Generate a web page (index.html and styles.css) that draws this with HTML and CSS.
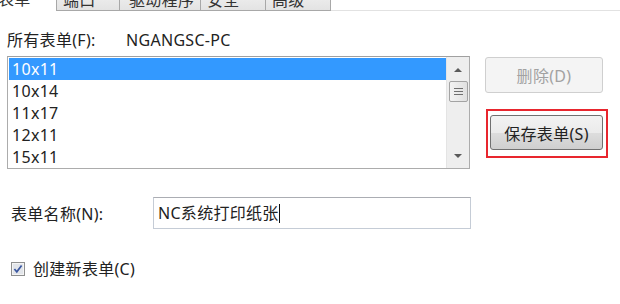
FILE: index.html
```html
<!DOCTYPE html>
<html lang="zh-CN">
<head>
    <meta charset="UTF-8" />
    <title>打印服务器属性</title>
    <link rel="stylesheet" href="styles.css">
</head>
<body>
    <div class="tabs">
        <div class="tab active">表单</div>
        <div class="tab w64">端口</div>
        <div class="tab w81">驱动程序</div>
        <div class="tab w65">安全</div>
        <div class="tab w65">高级</div>
        <div class="tab-fill"></div>
    </div>

    <div class="panel">
        <div class="server-row">
            <span class="server-label">所有表单(F):</span>
            <span>NGANGSC-PC</span>
        </div>

        <div class="forms-row">
            <div class="listbox">
                <ul class="list">
                    <li class="selected">10x11</li>
                    <li>10x14</li>
                    <li>11x17</li>
                    <li>12x11</li>
                    <li>15x11</li>
                </ul>
                <div class="scrollbar">
                    <span class="arrow up"></span>
                    <span class="thumb"><i></i><i></i><i></i></span>
                    <span class="arrow down"></span>
                </div>
            </div>

            <div class="side-buttons">
                <button class="btn btn-delete" disabled>删除(D)</button>
                <div class="mark">
                    <button class="btn btn-save">保存表单(S)</button>
                </div>
            </div>
        </div>

        <div class="name-row">
            <span class="name-label">表单名称(N):</span>
            <div class="name-input">NC系统打印纸张<span class="caret"></span></div>
        </div>

        <div class="check-row">
            <svg class="checkbox" width="14" height="14" viewBox="0 0 14 14">
                <rect x="0.5" y="0.5" width="13" height="13" fill="#f4f4f4" stroke="#8e8f8f"/>
                <rect x="2" y="2" width="10" height="10" fill="#e2e5ea"/>
                <path d="M3.4 7 L5.8 9.8 L10.6 3.4" fill="none" stroke="#3a57a0" stroke-width="1.7"/>
            </svg>
            <span>创建新表单(C)</span>
        </div>
    </div>
</body>
</html>
```

FILE: styles.css
```css
body {
    margin: 0;
    background: #ffffff;
    color: #222222;
    font-family: "Noto Sans", "Noto Sans CJK SC", sans-serif;
    font-size: 16px;
    letter-spacing: 0.3px;
}

.tabs {
    display: flex;
    align-items: flex-end;
    height: 11px;
    overflow: hidden;
}

.tab {
    flex: none;
    box-sizing: border-box;
    height: 22px;
    line-height: 21px;
    padding-left: 6px;
    background: linear-gradient(#f2f2f2, #e3e3e3);
    border: 1px solid #a8a8a8;
    border-left: none;
    color: #333333;
}

.tab.active {
    width: 58px;
    padding-left: 0;
    background: #ffffff;
    border: none;
    margin-left: -2px;
}

.tab.w64 { width: 64px; border-left: 1px solid #a8a8a8; }
.tab.w81 { width: 81px; padding-left: 9px; }
.tab.w65 { width: 65px; }

.tab-fill {
    flex: 1;
    height: 11px;
    box-sizing: border-box;
    border-bottom: 1px solid #e2e2e2;
}

.panel {
    padding-left: 7px;
}

.server-row {
    margin-top: 19px;
    line-height: 20px;
    display: flex;
}

.server-label {
    width: 119px;
}

.forms-row {
    display: flex;
    margin-top: 6px;
    gap: 15px;
}

.listbox {
    display: flex;
    width: 463px;
    height: 113px;
    box-sizing: border-box;
    border: 1px solid #acacac;
    border-top-color: #a0a0a0;
}

.list {
    flex: 1;
    list-style: none;
    margin: 0;
    padding: 1px 0 0 1px;
}

.list li {
    height: 22px;
    line-height: 22px;
    padding-left: 3px;
}

.list li.selected {
    background: #3399ff;
    color: #ffffff;
}

.scrollbar {
    width: 22px;
    background: #eeeeee;
    border-left: 1px solid #e4e4e4;
    display: flex;
    flex-direction: column;
    align-items: center;
}

.arrow {
    width: 0;
    height: 0;
    border-left: 4px solid transparent;
    border-right: 4px solid transparent;
}

.arrow.up {
    margin-top: 11px;
    border-bottom: 4px solid #5a5a5a;
}

.arrow.down {
    margin-top: auto;
    margin-bottom: 10px;
    border-top: 4px solid #5a5a5a;
}

.thumb {
    margin-top: 9px;
    width: 19px;
    height: 21px;
    box-sizing: border-box;
    border: 1px solid #a3a3a3;
    border-radius: 2px;
    background: linear-gradient(90deg, #f3f3f3, #e0e0e0);
    display: flex;
    flex-direction: column;
    align-items: center;
    justify-content: center;
    gap: 2px;
}

.thumb i {
    display: block;
    width: 9px;
    height: 1px;
    background: #6f6f6f;
}

.side-buttons {
    display: flex;
    flex-direction: column;
}

.btn {
    box-sizing: border-box;
    font-family: inherit;
    font-size: 16px;
    letter-spacing: 0.3px;
    border-radius: 3px;
    padding: 0;
}

.btn-delete {
    margin-top: 1px;
    width: 118px;
    height: 36px;
    border: 1px solid #cfcfcf;
    background: #f4f4f4;
    color: #a2a2a2;
}

.mark {
    margin-top: 16px;
    width: 122px;
    height: 49px;
    box-sizing: border-box;
    border: 2px solid #e8262e;
    padding: 4px 0 0 2px;
    margin-left: 1px;
}

.btn-save {
    width: 113px;
    height: 35px;
    border: 1px solid #707070;
    background: linear-gradient(#f2f2f2 0%, #ebebeb 50%, #dddddd 51%, #cfcfcf 100%);
    color: #222222;
}

.name-row {
    display: flex;
    align-items: center;
    margin-top: 28px;
    padding-left: 4px;
}

.name-label {
    width: 142px;
}

.name-input {
    width: 318px;
    height: 32px;
    box-sizing: border-box;
    border: 1px solid #c5ccd6;
    border-top-color: #abadb3;
    line-height: 30px;
    padding-left: 4px;
    display: flex;
    align-items: center;
}

.caret {
    width: 1px;
    height: 19px;
    background: #111111;
}

.check-row {
    display: flex;
    align-items: center;
    gap: 8px;
    margin-top: 30px;
    padding-left: 4px;
    line-height: 20px;
}

.checkbox {
    flex: none;
}
```
